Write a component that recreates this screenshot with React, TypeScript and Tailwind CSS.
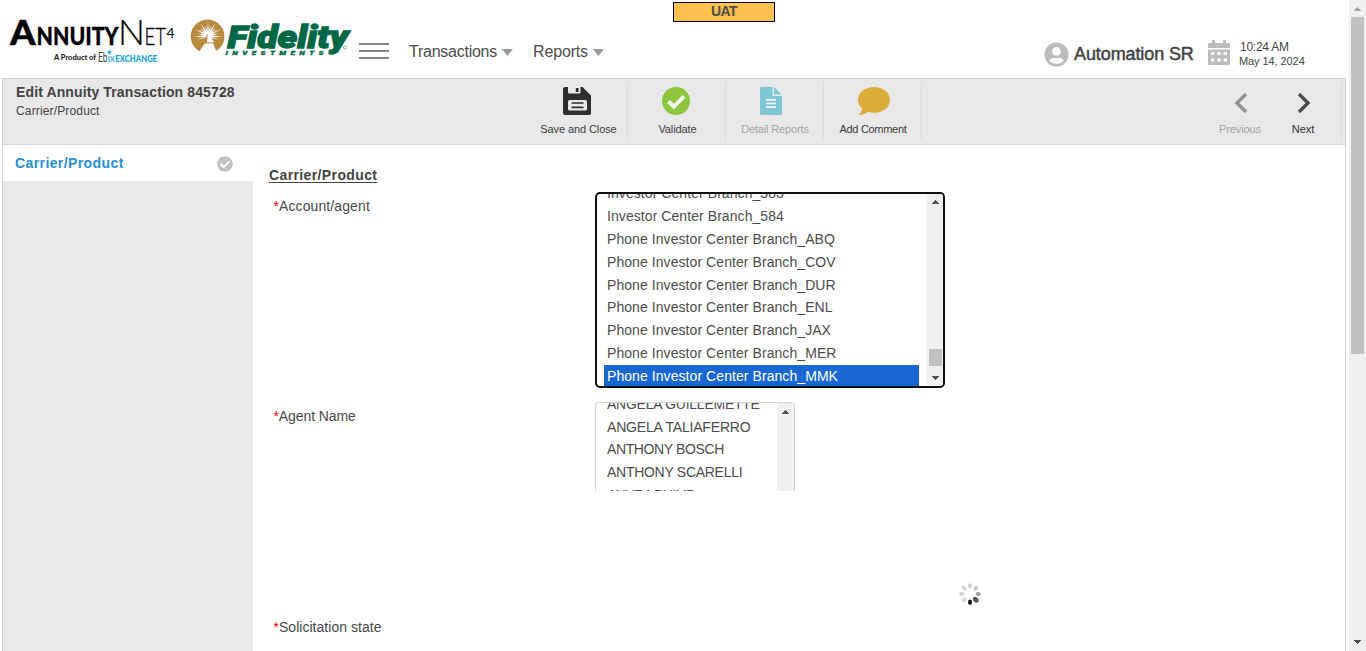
import React from "react";
import { FaUserCircle, FaCheckCircle } from "react-icons/fa";

const branches = [
  "Investor Center Branch_583",
  "Investor Center Branch_584",
  "Phone Investor Center Branch_ABQ",
  "Phone Investor Center Branch_COV",
  "Phone Investor Center Branch_DUR",
  "Phone Investor Center Branch_ENL",
  "Phone Investor Center Branch_JAX",
  "Phone Investor Center Branch_MER",
  "Phone Investor Center Branch_MMK",
];

const agents = [
  { name: "ANGELA GUILLEMETTE", cls: "tracking-[-0.25px]" },
  { name: "ANGELA TALIAFERRO", cls: "tracking-[-0.18px]" },
  { name: "ANTHONY BOSCH", cls: "tracking-[-0.38px]" },
  { name: "ANTHONY SCARELLI", cls: "tracking-[-0.28px]" },
  { name: "ANURA BHIMB", cls: "tracking-[-0.8px]" },
];

function Arrow({ down = false, light = false }: { down?: boolean; light?: boolean }) {
  return (
    <svg width="7" height="4" viewBox="0 0 7 4" className="block" fill={light ? "#a3a3a3" : "#505050"} shapeRendering="crispEdges">
      {down ? <path d="M0 0H7V1H6V2H5V3H4V4H3V3H2V2H1V1H0Z" /> : <path d="M3 0H4V1H5V2H6V3H7V4H0V3H1V2H2V1H3Z" />}
    </svg>
  );
}

function AnnuityNetLogo() {
  return (
    <svg width="178" height="50" viewBox="0 0 178 50" className="block shrink-0 overflow-visible">
      <g fontFamily="Lato, sans-serif" fill="#000">
        <text x="10" y="29" fontSize="35" fontWeight="900" stroke="#000" strokeWidth=".5" textLength="25.5" lengthAdjust="spacingAndGlyphs">A</text>
        <text x="36.5" y="29" fontSize="24" fontWeight="900" stroke="#000" strokeWidth=".3" textLength="82" lengthAdjust="spacingAndGlyphs">NNUITY</text>
        <text x="118" y="29" fontSize="35" fontWeight="300" stroke="#000" strokeWidth=".2" textLength="27" lengthAdjust="spacingAndGlyphs">N</text>
        <text x="144.5" y="29" fontSize="24" fontWeight="300" stroke="#000" strokeWidth=".3" textLength="21.5" lengthAdjust="spacingAndGlyphs">ET</text>
        <text x="166.5" y="22" fontSize="13" textLength="8" lengthAdjust="spacingAndGlyphs">4</text>
        <text x="54" y="44" fontSize="7" fontWeight="900" fill="#222" textLength="42" lengthAdjust="spacingAndGlyphs">A Product of</text>
        <text x="98" y="46" fontSize="13.5" fill="#333" textLength="9.5" lengthAdjust="spacingAndGlyphs">Eb</text>
        <text x="107.8" y="46" fontSize="12" fill="#16a0dc" textLength="7" lengthAdjust="spacingAndGlyphs">ix</text>
        <text x="115.3" y="46" fontSize="9.5" fontWeight="900" fill="#16a0dc" textLength="42" lengthAdjust="spacingAndGlyphs">EXCHANGE</text>
      </g>
      <circle cx="109.5" cy="36" r="1.6" fill="#16a0dc" />
    </svg>
  );
}

const rays = [-112, -96, -80, -64, -48, -32, -16, 0, 16, 32, 48, 64, 80, 96, 112];

function FidelityLogo() {
  return (
    <svg width="172" height="50" viewBox="178 12 172 50" className="block shrink-0 overflow-visible">
      <path d="M199.5 51.3A16.9 16.9 0 1 1 216.2 51L212.8 43.2L204.6 43.6Z" fill="#b78a40" />
      <g fill="#fff">
        {rays.map((r, i) => (
          <path key={r} d={i % 2 ? "M207 33L208 21.5L209 33Z" : "M207.2 33L208 24L208.8 33Z"} transform={`rotate(${r} 208 35.5)`} />
        ))}
        <circle cx="208" cy="34.2" r="3.4" />
        <path d="M208.3 32L214.2 42.4L206.6 42.2Z" />
      </g>
      <path d="M207.8 33L203.6 42.6L206.8 42.6Z" fill="#b78a40" />
      <g fill="#006747" fontFamily="Roboto, sans-serif" fontWeight="900" fontStyle="italic">
        <text x="227.5" y="48" fontSize="31" stroke="#006747" strokeWidth="1.3" textLength="121" lengthAdjust="spacingAndGlyphs">Fidelity</text>
      </g>
      <text transform="translate(225.5 55) scale(1.35 1)" fill="#006747" stroke="#006747" strokeWidth=".3" fontFamily="Roboto, sans-serif" fontWeight="900" fontStyle="italic" fontSize="6" textLength="72.5" lengthAdjust="spacing">INVESTMENTS</text>
      <circle cx="345" cy="47.5" r="1.5" fill="none" stroke="#7aa596" strokeWidth=".8" />
    </svg>
  );
}

function NavItem({ label, cls }: { label: string; cls: string }) {
  return (
    <div className={`flex shrink-0 items-center justify-between ${cls}`}>
      <span className="text-[16px] leading-[20px] whitespace-nowrap">{label}</span>
      <svg width="11" height="7" viewBox="0 0 11 7" className="block"><path d="M0 0H11L5.5 7Z" fill="#999" /></svg>
    </div>
  );
}

function Header() {
  return (
    <header className="flex h-[78px] items-start">
      <div className="flex pt-[16px]"><AnnuityNetLogo /></div>
      <div className="flex pt-[12px]"><FidelityLogo /></div>
      <div className="ml-[9px] mt-[43px] flex w-[30px] flex-col gap-[5px]">
        <div className="h-[2px] bg-[#858585]" />
        <div className="h-[2px] bg-[#858585]" />
        <div className="h-[2px] bg-[#858585]" />
      </div>
      <div className="ml-[20px] mt-[42px] flex gap-[20px] text-[#4c4c4c]">
        <NavItem label="Transactions" cls="w-[104px] tracking-[-0.25px]" />
        <NavItem label="Reports" cls="w-[71px] tracking-[-0.15px]" />
      </div>
      <div className="ml-[69px] mt-[2px] flex h-[20px] w-[102px] items-center justify-center border border-black bg-[#ffc04d] pb-px text-[14px] font-bold leading-[17px] tracking-[-0.6px] text-[#4c4c4c]">
        UAT
      </div>
      <div className="ml-[269px] mt-[42px] flex items-center">
        <FaUserCircle size={25} color="#bcbcbc" />
        <span className="-mt-px ml-[5px] w-[134px] whitespace-nowrap text-[18px] leading-[24px] tracking-[-0.1px] text-[#444] [-webkit-text-stroke:0.5px_#444]">Automation SR</span>
      </div>
      <div className="mt-[40px] flex">
        <svg width="22" height="26" viewBox="0 0 22 26" fill="#bcbcbc" className="block">
          <path d="M0 4.5Q0 3 1.5 3H4V.8Q4 0 4.9 0H6.1Q7 0 7 .8V3H15V.8Q15 0 15.9 0H17.1Q18 0 18 .8V3H20.5Q22 3 22 4.5V8H0Z" />
          <path fillRule="evenodd" d="M0 9.5H22V23.5Q22 25 20.5 25H1.5Q0 25 0 23.5ZM3 12V15H6.4V12ZM9.3 12V15H12.7V12ZM15.6 12V15H19V12ZM3 18.6V21.6H6.4V18.6ZM9.3 18.6V21.6H12.7V18.6ZM15.6 18.6V21.6H19V18.6Z" />
        </svg>
        <div className="ml-[9px] flex flex-col whitespace-nowrap text-[#444]">
          <span className="pl-px text-[12px] leading-[14px] tracking-[-0.25px]">10:24 AM</span>
          <span className="text-[11px] leading-[14px] tracking-[-0.08px]">May 14, 2024</span>
        </div>
      </div>
    </header>
  );
}

function Tool({ label, muted, labelCls, children }: { label: string; muted?: boolean; labelCls: string; children: React.ReactNode }) {
  return (
    <div className="flex h-[58px] w-[98px] flex-col items-center border-r border-[#dadada] pt-[5px]">
      <div className="flex h-[30px] items-start">{children}</div>
      <span className={`mt-[5px] whitespace-nowrap text-[11px] leading-[14px] ${labelCls} ${muted ? "text-[#a5a5a5]" : "text-[#3c3c3c]"}`}>{label}</span>
    </div>
  );
}

function Toolbar() {
  return (
    <div className="flex h-[67px] border-y border-[#d2d2d2] bg-[#e8e8e8]">
      <div className="flex w-[527px] flex-col pl-[13px] pt-[5px] text-[#444]">
        <span className="text-[14px] font-bold leading-[17px] tracking-[0.12px]">Edit Annuity Transaction 845728</span>
        <span className="mt-[2px] text-[12px] leading-[16px] tracking-[0.15px]">Carrier/Product</span>
      </div>
      <div className="flex pt-[3px]">
        <Tool label="Save and Close" labelCls="tracking-[-0.1px]">
          <svg width="28" height="28" viewBox="0 0 28 28" className="mr-[3px] block">
            <path fill="#2f2f2f" d="M2 0H5V5Q5 6.5 6.5 6.5H16Q17.5 6.5 17.5 5V0H19.5L28 8.5V26Q28 28 26 28H2Q0 28 0 26V2Q0 0 2 0Z" />
            <rect x="12.8" y="1" width="2.7" height="4" fill="#2f2f2f" />
            <rect x="5" y="13" width="19" height="10.5" rx="1.5" fill="#e8e8e8" />
            <path d="M8.5 16H20.5M8.5 20.4H20.5" stroke="#2f2f2f" strokeWidth="1.7" />
          </svg>
        </Tool>
        <Tool label="Validate" labelCls="pl-[2px] tracking-[-0.1px]">
          <svg width="28" height="28" viewBox="0 0 28 28" className="mr-px block">
            <circle cx="14" cy="14" r="14" fill="#8cc63f" />
            <path d="M6.5 14.5L11.8 19.7L22 9.3" fill="none" stroke="#f2f6ec" strokeWidth="4" />
          </svg>
        </Tool>
        <Tool label="Detail Reports" muted labelCls="pl-px tracking-[-0.15px]">
          <svg width="22" height="28" viewBox="0 0 22 28" className="mr-[8px] block">
            <path d="M1.5 0H12.5V9H22V26.5Q22 28 20.5 28H1.5Q0 28 0 26.5V1.5Q0 0 1.5 0ZM14 0L21.7 7.5H14Z" fill="#7fc6d5" />
            <path d="M6 12.8H16M6 16.5H16M6 20.2H16" stroke="#f0f6f7" strokeWidth="1.7" />
          </svg>
        </Tool>
        <Tool label="Add Comment" labelCls="pl-px tracking-[-0.3px]">
          <svg width="32" height="28" viewBox="0 0 32 28" className="ml-[2px] block">
            <path d="M16 0C25 0 32 5.5 32 13C32 20.5 25 26 16 25.7Q13 25.7 10 24.8Q6 28 .5 28Q3.5 25.5 4.2 21.6Q0 18 0 13C0 5.5 7 0 16 0Z" fill="#dcad38" />
          </svg>
        </Tool>
      </div>
      <div className="ml-auto mr-[3px] mt-[3px] flex h-[58px] border-r border-[#dadada]">
        <div className="flex w-[68px] flex-col items-center pt-[11px]">
          <svg width="14" height="20" viewBox="0 0 14 20" className="ml-[2px] block"><path d="M12 1L3 10L12 19" fill="none" stroke="#929292" strokeWidth="3.4" /></svg>
          <span className="mt-[9px] text-[11px] leading-[14px] tracking-[-0.1px] text-[#a5a5a5]">Previous</span>
        </div>
        <div className="mr-[9px] flex w-[58px] flex-col items-center pt-[11px]">
          <svg width="14" height="20" viewBox="0 0 14 20" className="ml-[2px] block"><path d="M2 1L11 10L2 19" fill="none" stroke="#4c4c4c" strokeWidth="3.4" /></svg>
          <span className="mt-[9px] text-[11px] leading-[14px] text-[#333]">Next</span>
        </div>
      </div>
    </div>
  );
}

function Required({ label, cls = "tracking-[0.1px]" }: { label: string; cls?: string }) {
  return (
    <div className={`w-[322px] shrink-0 pl-[0.5px] text-[14px] leading-[20px] text-[#484848] ${cls}`}>
      <span className="text-[#f00]">*</span>{label}
    </div>
  );
}

function BranchList() {
  return (
    <div className="flex h-[196px] w-[350px] overflow-hidden rounded-[5px] border-2 border-[#101010] bg-white">
      <div className="-mt-[11.7px] flex w-[322px] flex-col pl-[7px]">
        {branches.map((b, i) => (
          <div key={b} className={`h-[22.8px] shrink-0 whitespace-nowrap pl-[3px] text-[14px] leading-[23px] tracking-[0.07px] ${i === 8 ? "bg-[#1967d2] text-white" : "text-[#4c4c4c]"}`}>{b}</div>
        ))}
      </div>
      <div className="ml-auto flex w-[16px] flex-col items-center bg-[#f0f0f0] pt-[6px]">
        <Arrow />
        <div className="mt-[145px] h-[17px] w-[13px] bg-[#c1c1c1]" />
        <div className="mt-[10px]"><Arrow down /></div>
      </div>
    </div>
  );
}

function AgentList() {
  return (
    <div className="flex h-[89px] w-[200px] overflow-hidden rounded-t-[4px] border border-b-0 border-[#ced4da] bg-white">
      <div className="-mt-[10.2px] flex flex-1 flex-col pl-[11px]">
        {agents.map((a) => (
          <div key={a.name} className={`h-[22.75px] shrink-0 whitespace-nowrap text-[14px] leading-[23px] text-[#4c4c4c] ${a.cls}`}>{a.name}</div>
        ))}
      </div>
      <div className="flex w-[17px] flex-col items-center bg-[#f0f0f0] pt-[7px]"><Arrow /></div>
    </div>
  );
}

const dots = ["#d0d0d0", "#c4c4c4", "#9c9c9c", "#555", "#111", "#d4d4d4", "#d0d0d0", "#d0d0d0"];

function Spinner() {
  return (
    <svg width="24" height="24" viewBox="-12 -12 24 24" className="block">
      {dots.map((c, i) => (
        <ellipse key={i} cx="0" cy="-8.2" rx={i === 3 ? 2.4 : 2} ry={i === 3 ? 3.2 : 2.6} fill={c} transform={`rotate(${i * 45})`} />
      ))}
    </svg>
  );
}

export default function App() {
  return (
    <div className="flex h-[651px] w-[1366px] overflow-hidden bg-white font-['Liberation_Sans',Arial,sans-serif]">
      <div className="flex w-[1349px] flex-col">
        <Header />
        <main className="ml-[2px] flex w-[1344px] flex-1 flex-col border-x border-[#d0d0d0]">
          <Toolbar />
          <div className="flex flex-1">
            <aside className="w-[250px] bg-[#e8e8e8]">
              <div className="flex h-[36px] items-center justify-between bg-white pl-[12px] pr-[20px]">
                <span className="text-[14px] font-bold leading-[18px] tracking-[0.4px] text-[#2790d6]">Carrier/Product</span>
                <FaCheckCircle size={16} color="#c4c4c4" className="mt-[2px]" />
              </div>
            </aside>
            <section className="flex flex-1 flex-col pl-[16px]">
              <h2 className="mt-[20px] text-[14px] font-bold leading-[20px] tracking-[0.38px] text-[#444] underline underline-offset-2">Carrier/Product</h2>
              <div className="mt-[7px] flex h-[196px] pl-[4px]">
                <div className="pt-[4px]"><Required label="Account/agent" /></div>
                <BranchList />
              </div>
              <div className="mt-[14px] flex h-[89px] pl-[4px]">
                <div className="pt-[4px]"><Required label="Agent Name" cls="tracking-[-0.1px]" /></div>
                <AgentList />
              </div>
              <div className="mt-[91px] pl-[689px]"><Spinner /></div>
              <div className="mt-[11px] pl-[4px]"><Required label="Solicitation state" cls="tracking-[0.03px]" /></div>
            </section>
          </div>
        </main>
      </div>
      <div className="flex w-[17px] flex-col items-center bg-[#f0f0f0] pb-[7px] pt-[7px]">
        <Arrow light />
        <div className="mt-[6px] h-[337px] w-[13px] bg-[#c1c1c1]" />
        <div className="mt-auto"><Arrow down /></div>
      </div>
    </div>
  );
}
